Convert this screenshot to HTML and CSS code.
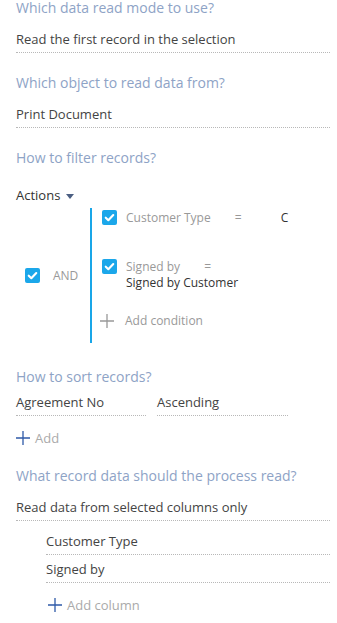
FILE: index.html
```html
<!DOCTYPE html>
<html lang="en">
  <head>
    <meta charset="UTF-8" />
    <title>Read data</title>
    <link rel="stylesheet" href="styles.css">
  </head>
  <body>
    <div class="page">
      <!-- Read mode -->
      <div class="caption">Which data read mode to use?</div>
      <div class="field">Read the first record in the selection</div>

      <!-- Object -->
      <div class="caption">Which object to read data from?</div>
      <div class="field">Print Document</div>

      <!-- Filter -->
      <div class="caption">How to filter records?</div>
      <div class="actions">Actions <span class="caret"></span></div>

      <div class="filter">
        <div class="group">
          <span class="check"><svg viewBox="0 0 14 14"><path d="M3.5 7.2l2.4 2.3 4.6-4.8" /></svg></span>
          <span class="group-label">AND</span>
        </div>
        <div class="conditions">
          <div class="condition">
            <span class="check"><svg viewBox="0 0 14 14"><path d="M3.5 7.2l2.4 2.3 4.6-4.8" /></svg></span>
            <div class="cond-text">
              <span class="cond-col">Customer Type</span>
              <span class="cond-op">=</span>
              <span class="cond-val">C</span>
            </div>
          </div>
          <div class="condition">
            <span class="check"><svg viewBox="0 0 14 14"><path d="M3.5 7.2l2.4 2.3 4.6-4.8" /></svg></span>
            <div class="cond-text">
              <span class="cond-col">Signed by</span>
              <span class="cond-op">=</span>
              <div class="cond-val">Signed by Customer</div>
            </div>
          </div>
          <div class="add-condition">
            <svg class="plus" viewBox="0 0 14 14"><path d="M7 0v14M0 7h14" /></svg>
            <span>Add condition</span>
          </div>
        </div>
      </div>

      <!-- Sort -->
      <div class="caption sort-caption">How to sort records?</div>
      <div class="sort-row">
        <div class="field sort-col">Agreement No</div>
        <div class="field sort-dir">Ascending</div>
      </div>
      <div class="add-link">
        <svg class="plus blue" viewBox="0 0 14 14"><path d="M7 0v14M0 7h14" /></svg>
        <span>Add</span>
      </div>

      <!-- Columns -->
      <div class="caption">What record data should the process read?</div>
      <div class="field">Read data from selected columns only</div>
      <div class="columns">
        <div class="field column">Customer Type</div>
        <div class="field column">Signed by</div>
        <div class="add-link">
          <svg class="plus blue" viewBox="0 0 14 14"><path d="M7 0v14M0 7h14" /></svg>
          <span>Add column</span>
        </div>
      </div>
    </div>
  </body>
</html>
```

FILE: styles.css
```css
/* Global */
body {
  margin: 0;
  background-color: #ffffff;
  font-family: "Open Sans", sans-serif;
  font-size: 13px;
  color: #444;
}

.page {
  padding: 0 7px 0 16px;
}

/* Captions */
.caption {
  font-size: 14px;
  line-height: 16px;
  color: #8ea3c6;
  margin-bottom: 12px;
}

/* Value fields with dotted underline */
.field {
  line-height: 20px;
  padding-top: 1px;
  padding-bottom: 3px;
  border-bottom: 1px dotted #b8b8b8;
  margin-bottom: 22px;
}

/* Actions menu */
.actions {
  margin-top: 20px;
  line-height: 18px;
  color: #333;
}

.caret {
  display: inline-block;
  width: 0;
  height: 0;
  margin-left: 2px;
  vertical-align: middle;
  border-left: 4px solid transparent;
  border-right: 4px solid transparent;
  border-top: 5px solid #4b5e82;
}

/* Filter block */
.filter {
  display: flex;
  margin-top: 4px;
  font-size: 12px;
}

.group {
  width: 74px;
  display: flex;
  align-items: center;
  padding-left: 9px;
  box-sizing: border-box;
}

.group-label {
  margin-left: 13px;
  color: #999;
}

.conditions {
  border-left: 2px solid #19a6e8;
  padding-left: 10px;
  padding-top: 2px;
  height: 135px;
  box-sizing: border-box;
}

.condition {
  display: flex;
  align-items: flex-start;
  margin-bottom: 33px;
}

.cond-text {
  margin-left: 9px;
  line-height: 16px;
}

.cond-col {
  color: #999;
}

.cond-op {
  color: #999;
  margin-left: 21px;
}

.cond-val {
  color: #333;
}

span.cond-val {
  margin-left: 36px;
}

.check {
  width: 15px;
  height: 15px;
  border-radius: 2px;
  background-color: #1ba7ea;
  flex-shrink: 0;
  display: flex;
}

.check svg {
  width: 15px;
  height: 15px;
  fill: none;
  stroke: #fff;
  stroke-width: 2;
  stroke-linecap: round;
  stroke-linejoin: round;
}

.add-condition {
  display: flex;
  align-items: center;
  line-height: 16px;
  color: #999;
  margin-top: -11px;
  margin-left: -2px;
}

.plus {
  width: 14px;
  height: 14px;
  fill: none;
  stroke: #999;
  stroke-width: 1.3;
  margin-right: 11px;
}

/* Sort block */
.sort-caption {
  margin-top: 26px;
  margin-bottom: 6px;
}

.sort-row {
  display: flex;
  gap: 11px;
}

.sort-col {
  width: 130px;
  margin-bottom: 14px;
}

.sort-dir {
  width: 131px;
  margin-bottom: 14px;
}

.add-link {
  display: flex;
  align-items: center;
  line-height: 16px;
  color: #aaa;
  margin-bottom: 22px;
}

.plus.blue {
  stroke: #2f5aa8;
  margin-right: 5px;
}

/* Columns list */
.columns {
  padding-left: 30px;
  margin-top: -13px;
}

.column {
  margin-bottom: 3px;
}

.columns .add-link {
  margin-top: 14px;
  padding-left: 2px;
}
```
